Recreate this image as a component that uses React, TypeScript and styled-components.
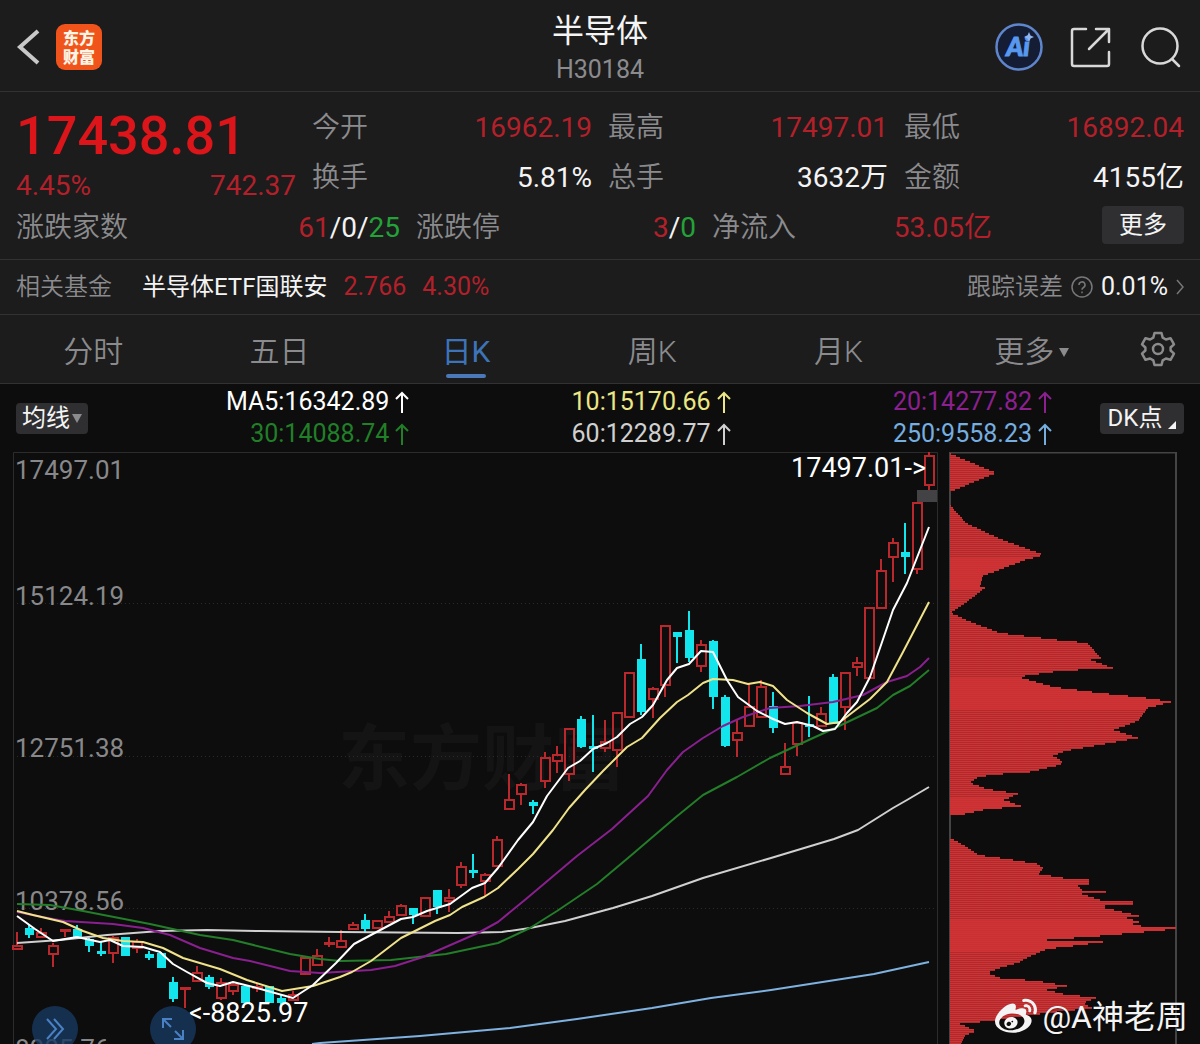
import React from 'react';
import styled, { createGlobalStyle } from 'styled-components';
import { FaWeibo } from 'react-icons/fa';

const RED = '#b3202a';
const GREEN = '#23a238';
const GREY = '#8b8b8d';
const WHITE = '#f4f4f4';
const BLUE = '#3d74b8';
const LINE = '#323234';

const GlobalStyle = createGlobalStyle`
  * { box-sizing: border-box; }
  body {
    margin: 0;
    background: #0d0d0d;
    color: ${WHITE};
    font-family: Roboto, "Noto Sans CJK SC", sans-serif;
  }
  button { font-family: inherit; border: 0; padding: 0; background: none; color: inherit; cursor: pointer; }
  a { color: inherit; text-decoration: none; }
  svg { display: block; flex: none; }
`;

const Page = styled.main`
  overflow: hidden;
`;

const Header = styled.header`
  display: grid;
  grid-template-columns: 1fr auto 1fr;
  align-items: center;
  height: 92px;
  padding: 2px 16px 0;
  background: #1c1c1d;
  border-bottom: 1px solid ${LINE};
`;

const HeaderSide = styled.div<{ $end?: boolean }>`
  display: flex;
  align-items: center;
  gap: ${(p) => (p.$end ? 25 : 12)}px;
  padding-right: ${(p) => (p.$end ? 2 : 0)}px;
  justify-content: ${(p) => (p.$end ? 'flex-end' : 'flex-start')};
`;

const Logo = styled.span`
  width: 46px;
  height: 46px;
  padding-top: 5px;
  border-radius: 9px;
  background: #f1541b;
  color: #fff5e6;
  font-size: 16px;
  font-weight: 900;
  line-height: 19px;
  text-align: center;
`;

const Heading = styled.div`
  padding-top: 6px;
  text-align: center;
`;

const Title = styled.h1`
  margin: 0;
  font-size: 32px;
  font-weight: 400;
  line-height: 40px;
`;

const Code = styled.div`
  color: ${GREY};
  font-size: 25px;
  line-height: 38px;
`;

const Quote = styled.section`
  padding: 11px 16px 6px;
  background: #1c1c1d;
  border-bottom: 1px solid ${LINE};
`;

const QuoteTop = styled.div`
  display: grid;
  grid-template-columns: repeat(4, 1fr);
  column-gap: 16px;
`;

const Price = styled.div`
  color: #db1519;
  font-size: 54px;
  font-weight: 500;
  line-height: 66px;
`;

const Change = styled.div`
  display: flex;
  justify-content: space-between;
  color: ${RED};
  font-size: 28px;
  line-height: 34px;
`;

const QuoteBottom = styled.div`
  display: grid;
  grid-template-columns: 384fr 280fr 280fr 176fr;
  column-gap: 16px;
  align-items: start;
`;

const Stat = styled.div`
  display: flex;
  justify-content: space-between;
  font-size: 28px;
  line-height: 50px;
  white-space: nowrap;
`;

const Label = styled.span`
  color: ${GREY};
  font-weight: 350;
`;

const Value = styled.span<{ $color?: string }>`
  color: ${(p) => p.$color || WHITE};
`;

const MoreButton = styled.button`
  justify-self: end;
  width: 82px;
  height: 38px;
  margin-top: 3px;
  border-radius: 4px;
  background: #2f2f31;
  font-size: 24px;
  line-height: 38px;
`;

const Fund = styled.section`
  display: flex;
  justify-content: space-between;
  height: 55px;
  padding: 0 16px;
  background: #1c1c1d;
  border-bottom: 1px solid ${LINE};
  font-size: 24px;
  line-height: 54px;
`;

const FundLink = styled.a`
  display: flex;
  align-items: center;

  ${Value} { font-size: 25px; }
`;

const FundName = styled.span`
  margin: 0 16px 0 30px;
`;

const FundRate = styled(Value)`
  margin-left: 16px;
`;

const Tracking = styled(FundLink)`
  gap: 8px;
`;

const Tabs = styled.nav`
  display: grid;
  grid-template-columns: repeat(6, 1fr) 80px;
  height: 69px;
  padding-right: 2px;
  background: #1c1c1d;
  border-bottom: 1px solid ${LINE};
`;

const Tab = styled.button<{ $active?: boolean }>`
  display: flex;
  flex-direction: column;
  align-items: center;
  padding-top: 17px;
  color: ${(p) => (p.$active ? BLUE : GREY)};
  font-size: 30px;
  font-weight: ${(p) => (p.$active ? 400 : 350)};
  line-height: 40px;

  &::after {
    content: '';
    width: 40px;
    height: 4px;
    margin-top: 2px;
    border-radius: 2px;
    background: ${(p) => (p.$active ? '#4a78b8' : 'transparent')};
  }
`;

const TabText = styled.span<{ $menu?: boolean }>`
  display: flex;
  align-items: center;
  gap: 5px;
  padding-left: ${(p) => (p.$menu ? 14 : 0)}px;
`;

const Settings = styled.button`
  display: grid;
  place-items: center;
`;

const Legend = styled.section`
  display: flex;
  align-items: center;
  height: 68px;
  padding: 0 16px;
`;

const Chip = styled.button<{ $wide?: boolean }>`
  display: flex;
  align-items: center;
  justify-content: center;
  gap: ${(p) => (p.$wide ? 6 : 2)}px;
  width: ${(p) => (p.$wide ? 84 : 72)}px;
  height: 31px;
  border-radius: 4px;
  background: #2f2f31;
  font-size: 24px;
  line-height: 32px;
`;

const Averages = styled.div`
  flex: 1;
  display: grid;
  grid-template-columns: repeat(3, 1fr);
  padding-right: 48px;
`;

const Average = styled.span<{ $color: string }>`
  display: flex;
  justify-content: flex-end;
  align-items: center;
  gap: 6px;
  color: ${(p) => p.$color};
  font-size: 25px;
  line-height: 32px;
  white-space: nowrap;
`;

const ChartArea = styled.section`
  position: relative;
  overflow: hidden;
`;

const ChartSvg = styled.svg`
  width: 100%;
  height: auto;
  font-size: 26px;
`;

const RoundButton = styled.button<{ $left: number }>`
  position: absolute;
  left: ${(p) => p.$left}px;
  bottom: -8px;
  display: grid;
  place-items: center;
  width: 46px;
  height: 46px;
  border-radius: 50%;
  background: rgba(24, 56, 96, 0.8);
`;

const Signature = styled.div`
  position: absolute;
  right: 12px;
  bottom: 6px;
  display: flex;
  align-items: center;
  gap: 5px;
  font-size: 32px;
  line-height: 42px;
  text-shadow: 0 1px 2px rgba(0, 0, 0, 0.5);
`;

type Candle = ['r' | 'c', number, number, number, number];

// [direction, high, body top, body bottom, low], one candle every 12 units
const candles: Candle[] = [
  ['r', 932, 945, 950, 950], ['c', 925, 928, 935, 938], ['r', 928, 932, 938, 938], ['r', 943, 945, 955, 967],
  ['r', 929, 929, 932, 937], ['c', 925, 929, 938, 938], ['c', 938, 939, 946, 952], ['c', 941, 951, 954, 956],
  ['r', 936, 937, 954, 963], ['c', 937, 937, 956, 956], ['r', 939, 941, 949, 953], ['c', 951, 954, 958, 960],
  ['c', 952, 953, 968, 968], ['c', 977, 982, 999, 1002], ['r', 987, 987, 990, 1008], ['r', 966, 972, 982, 982],
  ['c', 975, 977, 987, 989], ['r', 978, 982, 999, 1000], ['r', 983, 984, 992, 995], ['c', 986, 986, 1003, 1003],
  ['r', 983, 986, 988, 992], ['c', 986, 986, 1003, 1003], ['c', 995, 998, 1003, 1006], ['r', 991, 994, 1001, 1001],
  ['r', 956, 957, 975, 975], ['r', 949, 955, 966, 966], ['r', 937, 942, 945, 947], ['r', 930, 940, 948, 948],
  ['r', 922, 924, 930, 930], ['c', 914, 920, 929, 933], ['r', 920, 920, 929, 929], ['r', 911, 916, 923, 923],
  ['r', 904, 905, 916, 916], ['c', 908, 908, 915, 924], ['r', 897, 897, 917, 917], ['c', 890, 890, 907, 914],
  ['r', 889, 897, 902, 912], ['r', 862, 866, 886, 888], ['c', 854, 870, 873, 878], ['r', 873, 874, 882, 896],
  ['r', 836, 839, 867, 867], ['r', 774, 799, 810, 810], ['r', 783, 784, 795, 805], ['c', 800, 802, 806, 814],
  ['r', 752, 757, 782, 788], ['r', 746, 754, 762, 773], ['r', 728, 728, 775, 781], ['c', 716, 719, 747, 748],
  ['c', 715, 746, 749, 772], ['r', 720, 741, 749, 752], ['r', 712, 712, 751, 767], ['r', 672, 672, 718, 718],
  ['c', 644, 659, 712, 715], ['r', 687, 688, 700, 718], ['r', 625, 625, 686, 697], ['c', 632, 632, 637, 663],
  ['c', 611, 630, 658, 662], ['r', 640, 644, 667, 672], ['c', 640, 641, 697, 709], ['c', 695, 697, 746, 747],
  ['r', 720, 732, 741, 757], ['r', 683, 706, 727, 727], ['r', 680, 686, 718, 718], ['c', 692, 706, 728, 733],
  ['r', 743, 766, 775, 775], ['r', 722, 722, 745, 756], ['c', 696, 724, 726, 737], ['r', 707, 713, 727, 727],
  ['c', 674, 677, 724, 724], ['r', 672, 672, 708, 730], ['r', 657, 662, 668, 676], ['r', 607, 607, 679, 679],
  ['r', 559, 570, 609, 609], ['r', 538, 542, 558, 582], ['c', 523, 552, 557, 574], ['r', 502, 502, 570, 574],
  ['r', 452, 455, 486, 490],
];

const averageLines = [
  { color: '#7fb2e0', points: '312,1044 320,1043 420,1036 510,1028 577,1019 652,1008 711,998 771,990 874,974 929,962' },
  { color: '#d0d0d0', points: '17,943 60,940 107,935 160,931 207,930 260,931 340,932 458,933 502,932 530,928 565,921 613,908 652,896 703,878 771,858 834,839 858,830 893,808 907,800 929,787' },
  { color: '#237d29', points: '17,904 50,905 83,911 150,924 200,935 233,940 290,954 320,959 340,961 391,960 446,954 498,943 530,928 557,911 597,884 628,858 676,817 703,795 737,777 770,758 800,744 835,728 877,708 893,695 910,686 929,670' },
  { color: '#8a1f90', points: '17,912 53,919 65,921 113,924 143,928 170,935 200,948 233,958 250,961 290,971 320,973 371,970 395,966 423,957 478,933 498,922 526,899 577,856 612,829 648,796 667,770 683,752 703,738 723,726 743,717 770,708 800,706 833,702 863,695 887,682 907,676 920,667 929,658' },
  { color: '#efe28a', points: '17,911 33,915 63,922 83,931 103,938 123,941 143,942 163,948 183,958 220,969 247,980 282,991 313,986 340,977 352,972 371,961 401,938 411,933 435,921 450,915 462,907 484,897 498,888 518,869 533,854 553,830 569,808 585,790 603,771 627,747 642,738 660,718 677,702 688,695 703,683 713,679 733,680 748,684 760,682 773,686 787,700 807,713 827,724 840,722 853,712 870,699 887,682 903,652 929,602' },
  { color: '#ffffff', points: '17,916 35,929 53,941 77,937 100,942 110,940 123,946 143,947 160,952 173,964 187,972 207,983 220,986 233,982 253,987 293,998 313,985 336,963 354,944 401,919 413,917 427,911 450,904 472,888 485,883 498,868 518,840 533,822 547,796 568,768 580,761 593,749 607,743 617,737 630,724 642,717 653,705 667,680 677,668 689,664 701,651 713,652 727,680 738,697 757,711 773,719 785,724 797,722 813,726 823,731 835,729 847,713 857,702 870,677 880,648 893,610 907,583 929,527' },
];

// outline of the chip distribution as [y, right edge]
const profile: [number, number][] = [
  [453, 951], [472, 996], [491, 950], [504, 950], [522, 966], [538, 1000], [554, 1044], [559, 1025], [575, 983],
  [585, 980], [587, 985], [600, 968], [612, 951], [622, 973], [632, 1000], [639, 1057], [642, 1087], [657, 1101],
  [658, 1088], [667, 1113], [670, 1060], [676, 1018], [686, 1053], [692, 1100], [698, 1155], [701, 1171],
  [707, 1148], [720, 1138], [729, 1114], [737, 1138], [742, 1110], [747, 1083], [750, 1065], [755, 1053],
  [760, 1062], [764, 1060], [771, 1030], [774, 990], [777, 977], [782, 970], [788, 987], [793, 1018], [799, 1004],
  [805, 1021], [809, 983], [814, 960], [815, 950], [837, 950], [845, 965], [854, 978], [858, 1007], [863, 1037],
  [867, 1043], [873, 1039], [877, 1063], [879, 1089], [883, 1089], [885, 1078], [889, 1082], [891, 1106],
  [893, 1082], [899, 1100], [901, 1133], [903, 1133], [905, 1105], [907, 1105], [915, 1139], [917, 1127], [921, 1139],
  [923, 1133], [926, 1145], [927, 1176], [929, 1165], [932, 1133], [935, 1100], [939, 1047], [941, 1103],
  [945, 1073], [948, 1047], [957, 1027], [962, 1018], [967, 1000], [972, 987], [977, 1000], [980, 1037],
  [985, 1067], [989, 1047], [993, 1063], [997, 1096], [1002, 1083], [1007, 1092], [1013, 1040], [1020, 990],
  [1023, 960], [1030, 976], [1035, 965], [1044, 960],
];

const solidBands = [[556, 588], [676, 707], [797, 813], [919, 950]];

function profileEdge(y: number) {
  for (let i = 1; i < profile.length; i++) {
    const [y0, x0] = profile[i - 1];
    const [y1, x1] = profile[i];
    if (y <= y1) return x0 + ((x1 - x0) * (y - y0)) / (y1 - y0);
  }
  return 950;
}

const profileRows = Array.from({ length: 296 }, (_, i) => {
  const y = 453 + i * 2;
  return { y, width: Math.round(profileEdge(y) - 950), solid: solidBands.some(([a, b]) => y >= a && y <= b) };
}).filter((row) => row.width > 0);

const priceLabels = [
  { y: 479, text: '17497.01' },
  { y: 605, text: '15124.19' },
  { y: 757, text: '12751.38' },
  { y: 910, text: '10378.56' },
  { y: 1058, text: '8005.76' },
];

function CandleMark({ index, candle }: { index: number; candle: Candle }) {
  const [kind, high, top, bottom, low] = candle;
  const x = 17 + index * 12;
  const height = Math.max(bottom - top, 3);
  if (kind === 'c') {
    return (
      <g fill="#12e6ec">
        <rect x={x - 1} y={high} width="2" height={low - high} />
        <rect x={x - 4} y={top} width="9" height={height} />
      </g>
    );
  }
  return (
    <g stroke="#b8282c" strokeWidth="2" fill="none">
      <path d={`M${x} ${high}V${top}M${x} ${bottom}V${low}`} />
      <rect x={x - 4} y={top + 1} width="9" height={Math.max(height - 2, 1)} />
    </g>
  );
}

function Chart() {
  return (
    <ChartSvg viewBox="0 452 1200 592" role="img" aria-label="日K">
      <text x="338" y="784" fontSize="72" fontWeight="700" fill="#141415">东方财富</text>
      <g stroke="#2b2b2c" strokeDasharray="1 3">
        <path d="M13 603.5H937M13 756.5H937M13 908.5H937" />
      </g>
      <path d="M13.5 1044V452.5H937.5V1044" stroke="#2c2c2d" fill="none" />
      <path d="M950 1044V452.5H1176V1044" stroke="#444444" strokeWidth="2" fill="none" />
      {profileRows.map((row) => (
        <g key={row.y}>
          <rect x="950" y={row.y} width={row.width} height="1" fill="#cf3335" />
          <rect x="950" y={row.y + 1} width={row.width} height="1" fill={row.solid ? '#c93032' : '#ad2b2d'} />
        </g>
      ))}
      <g fill="#88888a">
        {priceLabels.map((label) => (
          <text key={label.text} x="15" y={label.y}>{label.text}</text>
        ))}
      </g>
      <rect x="917" y="490" width="20" height="12" fill="#434345" />
      {candles.map((candle, i) => (
        <CandleMark key={i} index={i} candle={candle} />
      ))}
      {averageLines.map((line) => (
        <polyline key={line.color} points={line.points} stroke={line.color} strokeWidth="2" strokeLinejoin="round" fill="none" />
      ))}
      <g fill="#ffffff" fontSize="27">
        <text x="926" y="477" textAnchor="end">17497.01-&gt;</text>
        <text x="189" y="1022">&lt;-8825.97</text>
      </g>
    </ChartSvg>
  );
}

function ArrowUp() {
  return (
    <svg width="14" height="22" viewBox="0 0 14 22" fill="none" stroke="currentColor" strokeWidth="2" aria-hidden="true">
      <path d="M7 22V2M1 8l6-6 6 6" />
    </svg>
  );
}

function Triangle() {
  return (
    <svg width="10" height="9" viewBox="0 0 10 9" fill="#8b8b8d" aria-hidden="true">
      <path d="M0 0h10L5 9z" />
    </svg>
  );
}

const averages = [
  ['MA5:16342.89', '#ffffff'],
  ['10:15170.66', '#ece784'],
  ['20:14277.82', '#8c2090'],
  ['30:14088.74', '#217f28'],
  ['60:12289.77', '#d0d0d0'],
  ['250:9558.23', '#76aee0'],
];

const tabs = ['分时', '五日', '日K', '周K', '月K', '更多'];

export default function App() {
  return (
    <Page>
      <GlobalStyle />
      <Header>
        <HeaderSide>
          <button aria-label="返回">
            <svg width="28" height="38" viewBox="0 0 28 38" fill="none" stroke="#c8c8c8" strokeWidth="4">
              <path d="M22 3L4 19l18 16" />
            </svg>
          </button>
          <Logo>东方<br />财富</Logo>
        </HeaderSide>
        <Heading>
          <Title>半导体</Title>
          <Code>H30184</Code>
        </Heading>
        <HeaderSide $end>
          <button aria-label="Ai">
            <svg width="50" height="50" viewBox="0 0 50 50">
              <circle cx="25" cy="25" r="22.5" fill="#141d33" stroke="#5f86cc" strokeWidth="2.5" />
              <text x="24" y="34" textAnchor="middle" fontFamily="Lato" fontSize="26" fontWeight="900" fontStyle="italic" fill="#5898f0" stroke="#5898f0" strokeWidth="1">Ai</text>
              <path d="M35 10l1.500 3.500 3.500 1.500-3.500 1.500L35 20l-1.500-3.500L30 15l3.500-1.500z" fill="#8fb4ee" />
            </svg>
          </button>
          <button aria-label="分享">
            <svg width="44" height="44" viewBox="0 0 44 44" fill="none" stroke="#d8d8d8" strokeWidth="2.5" strokeLinecap="round" strokeLinejoin="round">
              <path d="M17 4H5a2 2 0 0 0-2 2v33a2 2 0 0 0 2 2h33a2 2 0 0 0 2-2V27M27 4h13v13M40 4L20 24" />
            </svg>
          </button>
          <button aria-label="搜索">
            <svg width="44" height="44" viewBox="0 0 44 44" fill="none" stroke="#d8d8d8" strokeWidth="2.5" strokeLinecap="round">
              <circle cx="22" cy="21" r="17.5" />
              <path d="M34 34l7 7" />
            </svg>
          </button>
        </HeaderSide>
      </Header>

      <Quote>
        <QuoteTop>
          <div>
            <Price>17438.81</Price>
            <Change><span>4.45%</span><span>742.37</span></Change>
          </div>
          <div>
            <Stat><Label>今开</Label><Value $color={RED}>16962.19</Value></Stat>
            <Stat><Label>换手</Label><Value>5.81%</Value></Stat>
          </div>
          <div>
            <Stat><Label>最高</Label><Value $color={RED}>17497.01</Value></Stat>
            <Stat><Label>总手</Label><Value>3632万</Value></Stat>
          </div>
          <div>
            <Stat><Label>最低</Label><Value $color={RED}>16892.04</Value></Stat>
            <Stat><Label>金额</Label><Value>4155亿</Value></Stat>
          </div>
        </QuoteTop>
        <QuoteBottom>
          <Stat>
            <Label>涨跌家数</Label>
            <span><Value $color={RED}>61</Value>/0/<Value $color={GREEN}>25</Value></span>
          </Stat>
          <Stat>
            <Label>涨跌停</Label>
            <span><Value $color={RED}>3</Value>/<Value $color={GREEN}>0</Value></span>
          </Stat>
          <Stat><Label>净流入</Label><Value $color={RED}>53.05亿</Value></Stat>
          <MoreButton>更多</MoreButton>
        </QuoteBottom>
      </Quote>

      <Fund>
        <FundLink href="#fund">
          <Label>相关基金</Label>
          <FundName>半导体ETF国联安</FundName>
          <Value $color={RED}>2.766</Value>
          <FundRate $color={RED}>4.30%</FundRate>
        </FundLink>
        <Tracking href="#tracking">
          <Label>跟踪误差</Label>
          <svg width="22" height="22" viewBox="0 0 22 22" fill="none" stroke="#77777a" strokeWidth="1.5" aria-hidden="true">
            <circle cx="11" cy="11" r="10" />
            <path d="M8 9a3 3 0 1 1 4.500 2.500c-1 .6-1.500 1-1.500 2.300M11 15.500v1.700" />
          </svg>
          <Value>0.01%</Value>
          <svg width="8" height="16" viewBox="0 0 8 16" fill="none" stroke="#77777a" strokeWidth="1.5" aria-hidden="true">
            <path d="M1 1l6 7-6 7" />
          </svg>
        </Tracking>
      </Fund>

      <Tabs>
        {tabs.map((name) => (
          <Tab key={name} $active={name === '日K'}>
            <TabText $menu={name === '更多'}>{name}{name === '更多' && <Triangle />}</TabText>
          </Tab>
        ))}
        <Settings aria-label="设置">
          <svg width="36" height="36" viewBox="0 0 36 36" fill="none" stroke="#8b8b8d" strokeWidth="2.5" strokeLinejoin="round">
            <path d="M14.500 2h7l1.200 4.600 3.200 1.900 4.600-1.300 3.500 6.100-3.400 3.200v3l3.400 3.200-3.500 6.100-4.600-1.300-3.200 1.900L21.500 34h-7l-1.200-4.600-3.200-1.900-4.600 1.300L2 22.700l3.400-3.200v-3L2 13.300l3.500-6.100 4.600 1.300 3.200-1.900z" />
            <circle cx="18" cy="18" r="5" />
          </svg>
        </Settings>
      </Tabs>

      <Legend>
        <Chip>均线<Triangle /></Chip>
        <Averages>
          {averages.map(([text, color]) => (
            <Average key={text} $color={color}>{text}<ArrowUp /></Average>
          ))}
        </Averages>
        <Chip $wide>
          DK点
          <svg width="8" height="24" viewBox="0 0 8 24" fill="#f4f4f4" aria-hidden="true">
            <path d="M8 15v8H0z" />
          </svg>
        </Chip>
      </Legend>

      <ChartArea>
        <Chart />
        <RoundButton $left={32} aria-label="展开">
          <svg width="22" height="24" viewBox="0 0 22 24" fill="none" stroke="#4a80c4" strokeWidth="2">
            <path d="M3 2l9 10-9 10M10 2l9 10-9 10" />
          </svg>
        </RoundButton>
        <RoundButton $left={150} aria-label="全屏">
          <svg width="24" height="24" viewBox="0 0 24 24" fill="none" stroke="#4a80c4" strokeWidth="2">
            <path d="M2 11V2h9M2 2l8 8M22 13v9h-9M22 22l-8-8" />
          </svg>
        </RoundButton>
        <Signature><FaWeibo size={42} />@A神老周</Signature>
      </ChartArea>
    </Page>
  );
}
